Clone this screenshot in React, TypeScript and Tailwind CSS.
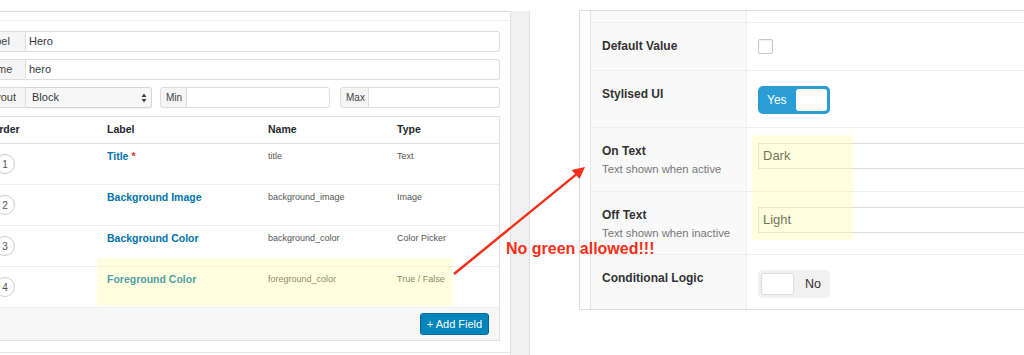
import type { ReactNode } from 'react';

interface FieldRow {
    order: number;
    label: string;
    name: string;
    type: string;
    required?: boolean;
}

const fields: FieldRow[] = [
    { order: 1, label: 'Title', name: 'title', type: 'Text', required: true },
    { order: 2, label: 'Background Image', name: 'background_image', type: 'Image' },
    { order: 3, label: 'Background Color', name: 'background_color', type: 'Color Picker' },
    { order: 4, label: 'Foreground Color', name: 'foreground_color', type: 'True / False' },
];

function Addon({ children, width, small }: { children: ReactNode; width: string; small?: boolean }) {
    return (
        <div
            className={`flex h-full shrink-0 items-center rounded-l-[3px] border border-[#dddddd] bg-[#f5f5f5] text-[#444] ${small ? 'pl-[5px] text-[10px]' : 'pl-[7px] text-[11px]'} ${width}`}
        >
            {children}
        </div>
    );
}

function TextInput({ value, className = '' }: { value?: string; className?: string }) {
    return (
        <div className={`flex h-full items-center rounded-r-[3px] border border-l-0 border-[#dddddd] bg-white pl-[3px] text-[11px] text-[#32373c] ${className}`}>
            {value}
        </div>
    );
}

function SettingRow({ label, desc, height, children }: { label: string; desc?: string; height: string; children: ReactNode }) {
    return (
        <div className={`flex border-t border-[#eeeeee] ${height}`}>
            <div className="w-[156px] shrink-0 border-r border-[#eeeeee] bg-[#f9f9f9] pl-[11px] pt-[15px]">
                <p className="text-[12px] font-bold leading-[16px] text-[#333]">{label}</p>
                {desc && <p className="mt-[2px] text-[11.3px] leading-[16px] text-[#777]">{desc}</p>}
            </div>
            <div className="flex-1 pl-[11px] pt-[15px]">{children}</div>
        </div>
    );
}

export default function App() {
    return (
        <div className="relative flex h-[355px] w-[1024px] items-start overflow-hidden bg-white font-['Liberation_Sans',Arial,sans-serif]">
            {/* Left: field group editor */}
            <div className="-ml-[35px] mt-[11px] flex w-[545px] shrink-0 flex-col border-t border-[#dcdcdc]">
                <div className="h-[9px] border-b border-[#eeeeee]" />
                <div className="flex flex-col gap-[7px] px-[10px] pt-[10px]">
                    <div className="flex h-[21px]">
                        <Addon width="w-[51px]">Label</Addon>
                        <TextInput value="Hero" className="flex-1" />
                    </div>
                    <div className="flex h-[21px]">
                        <Addon width="w-[51px]">Name</Addon>
                        <TextInput value="hero" className="flex-1" />
                    </div>
                    <div className="flex h-[21px]">
                        <Addon width="w-[51px]">Layout</Addon>
                        <div className="flex w-[126px] items-center justify-between rounded-r-[3px] border border-l-0 border-[#d5d5d5] bg-[#f7f7f7] pl-[6px] pr-[4px] text-[11px] text-[#32373c] shadow-[0_1px_1px_rgba(0,0,0,0.06)]">
                            <span>Block</span>
                            <svg width="6" height="10" viewBox="0 0 6 10">
                                <path d="M3 0.5 L5.5 4 L0.5 4 Z M3 9.5 L5.5 6 L0.5 6 Z" fill="#444" />
                            </svg>
                        </div>
                        <div className="ml-[8px] flex">
                            <Addon width="w-[27px]" small>Min</Addon>
                            <TextInput className="w-[143px]" />
                        </div>
                        <div className="ml-[10px] flex flex-1">
                            <Addon width="w-[29px]" small>Max</Addon>
                            <TextInput className="flex-1" />
                        </div>
                    </div>

                    {/* Sub fields table */}
                    <div className="mt-[1px] border border-[#e1e1e1]">
                        <div className="grid h-[27px] grid-cols-[122px_161px_129px_1fr] items-center border-b border-[#e1e1e1] text-[10.5px] font-bold text-[#23282d]">
                            <span className="pl-[15px]">Order</span>
                            <span className="pl-[9px]">Label</span>
                            <span className="pl-[9px]">Name</span>
                            <span className="pl-[9px]">Type</span>
                        </div>
                        {fields.map((f) => (
                            <div key={f.order} className="grid h-[41px] grid-cols-[122px_161px_129px_1fr] border-b border-[#eeeeee]">
                                <div className="flex items-center pl-[19px]">
                                    <span className="flex h-[20px] w-[20px] items-center justify-center rounded-full border border-[#cccccc] text-[10px] text-[#555]">
                                        {f.order}
                                    </span>
                                </div>
                                <div className="pl-[9px] pt-[5px] text-[10.5px] font-bold leading-[14px] text-[#0073aa]">
                                    {f.label}
                                    {f.required && <span className="ml-[3px] text-[#dc3232]">*</span>}
                                </div>
                                <div className="pl-[9px] pt-[5px] text-[9px] leading-[14px] text-[#555]">{f.name}</div>
                                <div className="pl-[9px] pt-[5px] text-[9px] leading-[14px] text-[#555]">{f.type}</div>
                            </div>
                        ))}
                        <div className="flex h-[32px] justify-end bg-[#f7f7f7] pr-[10px] pt-[5px]">
                            <button className="flex h-[22px] w-[69px] items-center justify-center rounded-[3px] border border-[#006799] bg-[#0085ba] text-[11px] text-white">
                                + Add Field
                            </button>
                        </div>
                    </div>
                </div>
                <div className="mt-[11px] border-t border-[#e5e5e5]" />
            </div>

            {/* Scroll gutter */}
            <div className="mt-[11px] h-[344px] w-[20px] shrink-0 border-l border-r border-[#e2e2e2] bg-[#f1f1f1]" />

            {/* Right: true / false field settings */}
            <div className="ml-[49px] mt-[10px] flex w-[460px] shrink-0 border border-[#dcdcdc]">
                <div className="w-[11px] shrink-0 border-r border-[#e5e5e5]" />
                <div className="flex-1">
                    <div className="flex h-[11px]">
                        <div className="w-[156px] border-r border-[#eeeeee] bg-[#f9f9f9]" />
                    </div>
                    <SettingRow label="Default Value" height="h-[48px]">
                        <div className="mt-[1px] h-[15px] w-[15px] rounded-[2px] border border-[#c8c8c8] bg-white shadow-[inset_0_1px_2px_rgba(0,0,0,0.07)]" />
                    </SettingRow>
                    <SettingRow label="Stylised UI" height="h-[57px]">
                        <div className="flex h-[28px] w-[72px] items-center justify-between rounded-[5px] bg-[#2a9dd7] px-[3px]">
                            <span className="ml-[6px] text-[12px] text-white">Yes</span>
                            <span className="h-[22px] w-[31px] rounded-[3px] bg-white" />
                        </div>
                    </SettingRow>
                    <SettingRow label="On Text" desc="Text shown when active" height="h-[64px]">
                        <div className="flex h-[26px] w-[300px] items-center border border-[#dddddd] bg-white pl-[4px] text-[13px] text-[#32373c]">Dark</div>
                    </SettingRow>
                    <SettingRow label="Off Text" desc="Text shown when inactive" height="h-[63px]">
                        <div className="flex h-[26px] w-[300px] items-center border border-[#dddddd] bg-white pl-[4px] text-[13px] text-[#32373c]">Light</div>
                    </SettingRow>
                    <SettingRow label="Conditional Logic" height="h-[55px]">
                        <div className="flex h-[28px] w-[72px] items-center rounded-[5px] bg-[#f1f1f1] px-[3px]">
                            <span className="h-[22px] w-[33px] rounded-[3px] border border-[#dddddd] bg-white" />
                            <span className="ml-[11px] text-[12.5px] text-[#333]">No</span>
                        </div>
                    </SettingRow>
                </div>
            </div>

            {/* Annotations */}
            <div className="pointer-events-none absolute left-[97px] top-[258px] h-[48px] w-[355px] bg-[#ffff99]/30" />
            <div className="pointer-events-none absolute left-[752px] top-[135px] h-[105px] w-[101px] bg-[#ffff99]/30" />
            <svg className="pointer-events-none absolute left-0 top-0" width="1024" height="355">
                <line x1="454" y1="274" x2="576" y2="174.6" stroke="#f5301a" strokeWidth="2.5" />
                <polygon points="585,167 579.5,179 571.5,170" fill="#f5301a" />
            </svg>
            <span className="pointer-events-none absolute left-[506px] top-[241px] text-[16px] font-bold leading-[16px] text-[#f5301a]">
                No green allowed!!!
            </span>
        </div>
    );
}
